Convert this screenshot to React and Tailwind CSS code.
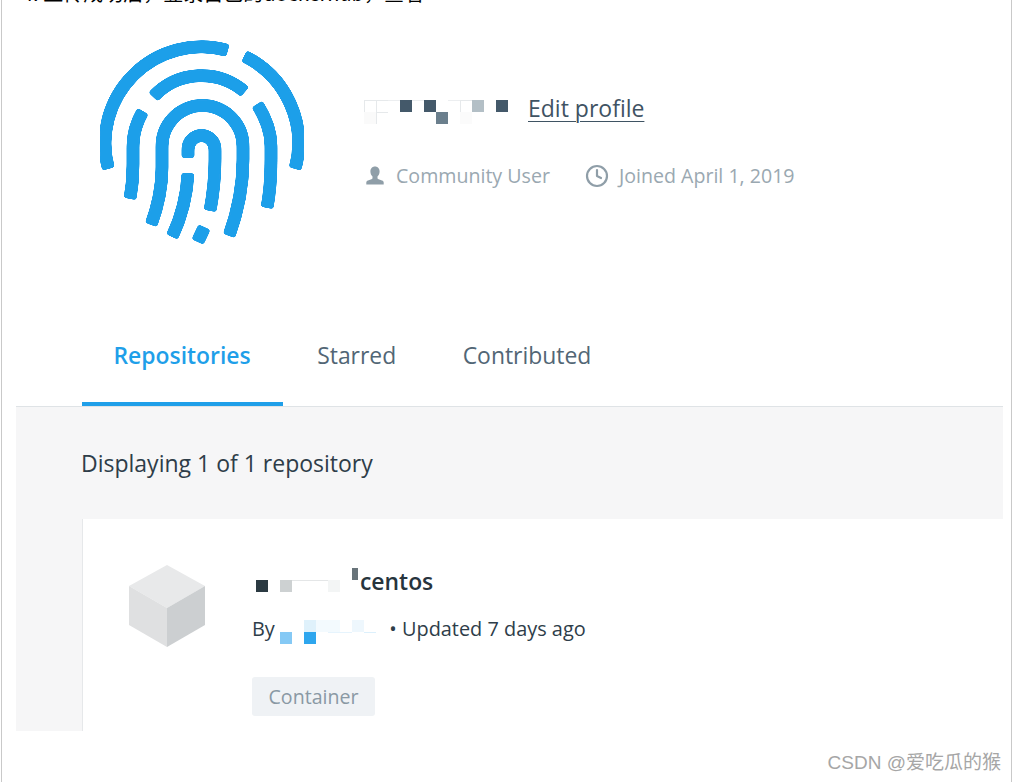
import { Clock } from "lucide-react";

const hair = "border-l border-t border-[#e6e9eb]";

const nameCells = [
  { col: 1, row: 1, color: hair },
  { col: 2, row: 1, color: hair },
  { col: 3, row: 1, color: "border-t border-[#eceef0]" },
  { col: 5, row: 1, color: "border-t border-[#eceef0]" },
  { col: 8, row: 1, color: "border-t border-[#eceef0]" },
  { col: 9, row: 1, color: hair },
  { col: 4, row: 1, color: "bg-[#44596a]" },
  { col: 6, row: 1, color: "bg-[#44596a]" },
  { col: 7, row: 2, color: "bg-[#6b7f8d]" },
  { col: 10, row: 1, color: "bg-[#b3bfc6]" },
  { col: 12, row: 1, color: "bg-[#44596a]" },
  { col: 1, row: 2, color: "bg-[#fafafa]" },
  { col: 2, row: 2, color: hair },
  { col: 9, row: 2, color: "bg-[#fbfbfb]" },
];

const ownerCells = [
  { col: 1, row: 2, color: "bg-[#85c9f5]" },
  { col: 3, row: 1, color: "bg-[#dff1fb]" },
  { col: 3, row: 2, color: "bg-[#2ea6ee]" },
  { col: 4, row: 1, color: "bg-[#f3fafe]" },
  { col: 5, row: 1, color: "bg-[#f3fafe]" },
  { col: 7, row: 1, color: "bg-[#eef7fd]" },
  { col: 8, row: 2, color: "border-t border-[#dcf0fc]" },
  { col: 5, row: 2, color: "border-t border-[#e6f4fd]" },
  { col: 6, row: 2, color: "border-t border-[#e6f4fd]" },
];

const repoCells = [
  { col: 1, row: 2, color: "bg-[#2b3a42]" },
  { col: 3, row: 2, color: "bg-[#cdd1d2]" },
  { col: 7, row: 2, color: "bg-[#f3f5f5]" },
  { col: 4, row: 2, color: "border-t border-[#e4e6e7]" },
  { col: 5, row: 2, color: "border-t border-[#e4e6e7]" },
  { col: 6, row: 2, color: "border-t border-[#e4e6e7]" },
  { col: 9, row: 1, color: "mr-[6px] bg-[#68747a]" },
];

const Mosaic = ({ cells, cols, rows, className = "" }) => (
  <div
    className={`grid auto-rows-[12px] grid-cols-[repeat(13,12px)] ${className}`}
    style={{ width: cols * 12, height: rows * 12 }}
  >
    {cells.map((cell) => (
      <span
        key={`${cell.col}-${cell.row}`}
        className={cell.color}
        style={{ gridColumn: cell.col, gridRow: cell.row }}
      />
    ))}
  </div>
);

const Fingerprint = () => (
  <svg width="204" height="204" viewBox="100 40 204 204" fill="none">
    {/* blur + threshold rounds the square stroke ends a little */}
    <filter id="soft-ends" x="-5%" y="-5%" width="110%" height="110%">
      <feGaussianBlur stdDeviation="1.6" />
      <feColorMatrix values="1 0 0 0 0 0 1 0 0 0 0 0 1 0 0 0 0 0 9 -4" />
      <feGaussianBlur stdDeviation="0.4" />
    </filter>
    <g stroke="#1f9fe9" strokeWidth="13" strokeLinejoin="round" filter="url(#soft-ends)">
      <path d="M108.5 169 A96.5 96.5 0 0 1 228 50.5" />
      <path d="M244 56 A96.5 96.5 0 0 1 295 169" />
      <path d="M153 97 A66 66 0 0 1 245 92" />
      <path d="M143 111 C136 123 133 134 133 146 V165 C133 177 132 188 130 199" />
      <path d="M151 225 C158 206 162 187 162 168 V146 A40.5 40.5 0 0 1 243 146 V160 C243 186 238 211 229 236" />
      <path d="M257 104 C266 118 271 132 271 146 V160 C271 176 270 192 267 208" />
      <path d="M188 158 V149 A13.5 13.5 0 0 1 215 149 V160 C215 178 213 195 210 211" />
      <path d="M188 173 C187 196 181 218 172 237" />
      <path d="M204.5 227 L197.5 242" strokeWidth="13.5" />
    </g>
  </svg>
);

const UserIcon = () => (
  <svg width="22" height="22" viewBox="0 0 22 22" fill="#8f9ea8">
    <path d="M11 1.5c2.9 0 4.6 2.2 4.6 5 0 2.2-.9 4-2.1 5v1.4c0 .7.4 1 1.1 1.3l3.4 1.3c1.1.4 1.7 1.1 1.7 2.1v1.9H2.3v-1.9c0-1 .6-1.7 1.7-2.1l3.4-1.3c.7-.3 1.1-.6 1.1-1.3v-1.4c-1.2-1-2.1-2.8-2.1-5 0-2.8 1.7-5 4.6-5z" />
  </svg>
);

const Cube = () => (
  <svg width="76" height="82" viewBox="0 0 76 82">
    <polygon points="38,0 76,21 38,43 0,21" fill="#e8e9ea" />
    <polygon points="0,21 38,43 38,82 0,60" fill="#dfe0e1" />
    <polygon points="76,21 38,43 38,82 76,60" fill="#cccfd1" />
  </svg>
);

const tabs = [
  { label: "Repositories", active: true },
  { label: "Starred" },
  { label: "Contributed" },
];

export default function App() {
  return (
    <div className="relative h-[782px] w-[1016px] overflow-hidden bg-white font-['Open_Sans',sans-serif]">
      <div className="ml-[1px] flex h-full w-[1011px] flex-col border-x border-[#c9c9c9] pl-[14px] pr-[8px]">
        <p className="-mt-[17px] h-[17px] whitespace-nowrap pl-[6px] font-['Noto_Sans_CJK_SC',sans-serif] text-[20px] leading-[20px] text-black">
          4. 上传成功后，登录自己的dockerhub，查看
        </p>

        <div className="flex h-[340px] pl-[84px] pt-[40px]">
          <Fingerprint />
          <div className="ml-[60px] pt-[50px]">
            <div className="flex h-[36px] items-start">
              <Mosaic cells={nameCells} cols={13} rows={2} className="mt-[10px]" />
              <a className="ml-[8px] mt-[1px] text-[23px] leading-[34px] text-[#3f5363] underline decoration-1 underline-offset-4">Edit profile</a>
            </div>
            <div className="mt-[36px] flex items-center text-[19.6px] leading-[28px] text-[#9aa8b1]">
              <UserIcon />
              <span className="ml-[10px]">Community User</span>
              <Clock size={24} strokeWidth={2.2} className="ml-[35px] text-[#8f9ea8]" />
              <span className="ml-[10px]">Joined April 1, 2019</span>
            </div>
          </div>
        </div>

        <div className="flex h-[66px] gap-[2.5px] pl-[65.5px]">
          {tabs.map((tab) => (
            <div
              key={tab.label}
              className={`h-[66px] px-[32px] pt-[1px] text-[22.9px] leading-[30px] ${tab.active ? "border-b-4 border-[#1f9fe9] font-semibold text-[#1f9fe9]" : "font-normal text-[#526675]"}`}
            >
              {tab.label}
            </div>
          ))}
        </div>

        <div className="flex h-[325px] flex-col overflow-hidden border-t border-[#dfe3e6] bg-[#f6f6f7] pl-[66px]">
          <p className="-ml-[1px] mt-[41px] text-[23px] leading-[30px] text-[#2e3d49]">Displaying 1 of 1 repository</p>
          <div className="mt-[41px] flex flex-1 border-l border-[#e6e8ea] bg-white pl-[46px] pt-[46px]">
            <Cube />
            <div className="ml-[47px]">
              <div className="flex h-[36px] items-start">
                <Mosaic cells={repoCells} cols={9} rows={2} className="ml-[4px] mt-[3px]" />
                <span className="-ml-[4px] text-[22.9px] font-semibold leading-[34px] text-[#27343d]">centos</span>
              </div>
              <div className="mt-[14px] flex h-[28px] items-center text-[19.9px] leading-[28px] text-[#2e3d49]">
                <span>By</span>
                <Mosaic cells={ownerCells} cols={9} rows={2} className="ml-[5px] mt-[6px]" />
                <span className="ml-[1.5px]">• Updated 7 days ago</span>
              </div>
              <div className="mt-[34px] inline-flex h-[39px] items-center rounded-[3px] bg-[#eff2f5] px-[16.5px] text-[19.6px] text-[#8a99a4]">Container</div>
            </div>
          </div>
        </div>
      </div>

      <span className="absolute right-[15px] top-[750px] font-['Liberation_Sans','Noto_Sans_CJK_SC',sans-serif] text-[19px] leading-[26px] text-[#a6a6a6]">CSDN @爱吃瓜的猴</span>
    </div>
  );
}
